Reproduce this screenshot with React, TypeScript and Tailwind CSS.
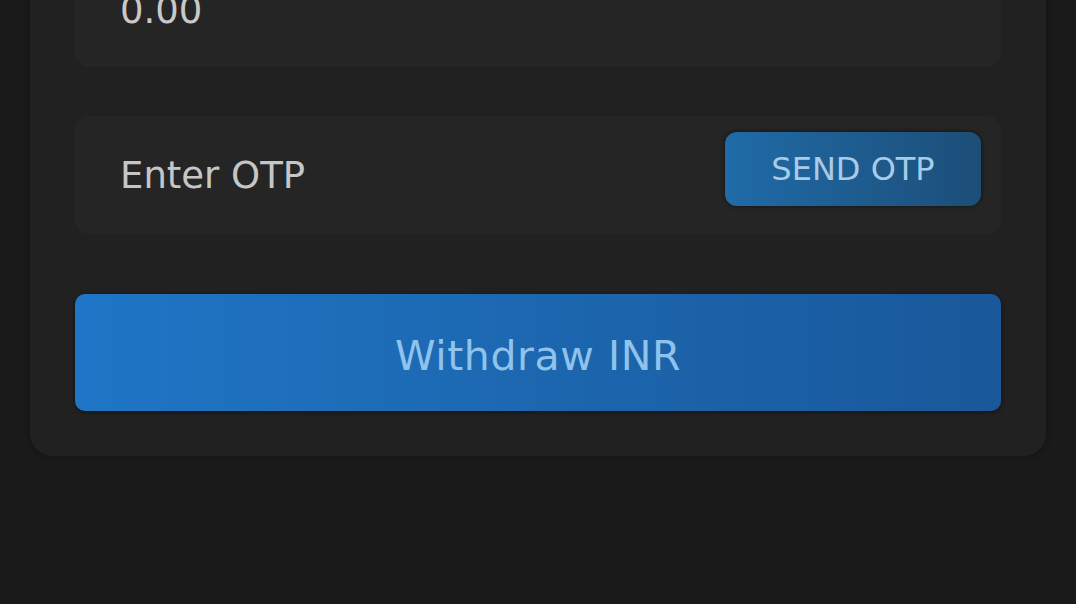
export default function App() {
  return (
    <div className="h-[604px] w-full overflow-hidden bg-[#1a1a1a] font-['DejaVu_Sans',sans-serif]">
      <div className="mx-[30px] -mt-[96px] flex flex-col rounded-[22px] bg-[#212121] p-[45px] shadow-[0_0_6px_rgba(0,0,0,0.35)]">
        {/* amount */}
        <div className="flex h-[118px] items-center rounded-[14px] bg-[#252525] pl-[45px] pt-[4px]">
          <span className="text-[37px] leading-none text-[#c9c9c9]">0.00</span>
        </div>

        {/* otp */}
        <div className="mt-[49px] flex h-[118px] items-center justify-between rounded-[14px] bg-[#252525] pl-[45px] pr-[20px]">
          <span className="text-[37px] leading-none text-[#c6c6c6]">Enter OTP</span>
          <button className="mb-[12px] flex h-[74px] w-[256px] items-center justify-center rounded-[12px] bg-gradient-to-r from-[#1f6ba8] to-[#1c4e78] text-[32px] leading-none text-[#a8cbe8] shadow-[0_0_4px_rgba(0,0,0,0.6)]">
            SEND OTP
          </button>
        </div>

        {/* submit */}
        <button className="mt-[60px] flex h-[117px] w-full items-center justify-center rounded-[10px] bg-gradient-to-r from-[#1f76c6] to-[#19589a] pt-[8px] text-[41px] leading-none tracking-[0.6px] text-[#8fc3ec] shadow-[0_1px_4px_rgba(0,0,0,0.5)]">
          Withdraw INR
        </button>
      </div>
    </div>
  );
}
